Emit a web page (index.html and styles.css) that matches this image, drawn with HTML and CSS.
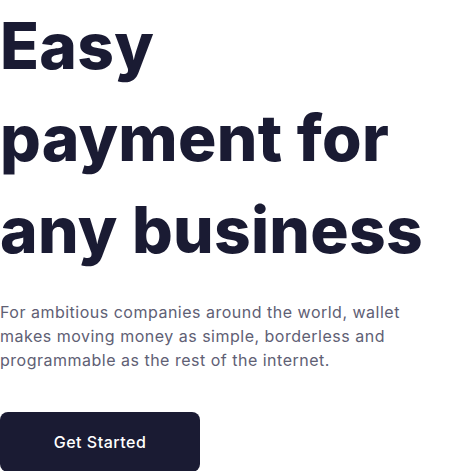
FILE: index.html
```html
<!DOCTYPE html>
<html lang="en">
<head>
<meta charset="utf-8">
<link rel="stylesheet" href="styles.css">
</head>
<body>
<section class="hero">
  <h1 class="title">Easy<br>payment for<br>any business</h1>
  <p class="lead">For ambitious companies around the world, wallet makes moving money as simple, borderless and programmable as the rest of the internet.</p>
  <a class="btn" href="#">Get Started</a>
</section>
</body>
</html>
```
FILE: styles.css
```css
html, body { margin: 0; padding: 0; background: #fff; }
body { font-family: "Inter", "Noto Sans", sans-serif; }
.hero { display: flex; flex-direction: column; align-items: flex-start; }
.title {
  margin: 0;
  font-size: 64px;
  line-height: 92px;
  font-weight: 800;
  color: #1a1b33;
  letter-spacing: 0.3px;
}
.lead {
  margin: 24px 0 0;
  font-size: 16px;
  line-height: 24px;
  color: #606074;
  letter-spacing: 0.5px;
  max-width: 420px;
}
.btn {
  margin-top: 40px;
  width: 200px;
  height: 60px;
  display: flex;
  align-items: center;
  justify-content: center;
  background: #1a1b33;
  color: #fff;
  border-radius: 8px;
  text-decoration: none;
  font-size: 16px;
  font-weight: 500;
  letter-spacing: 0.5px;
}
```
